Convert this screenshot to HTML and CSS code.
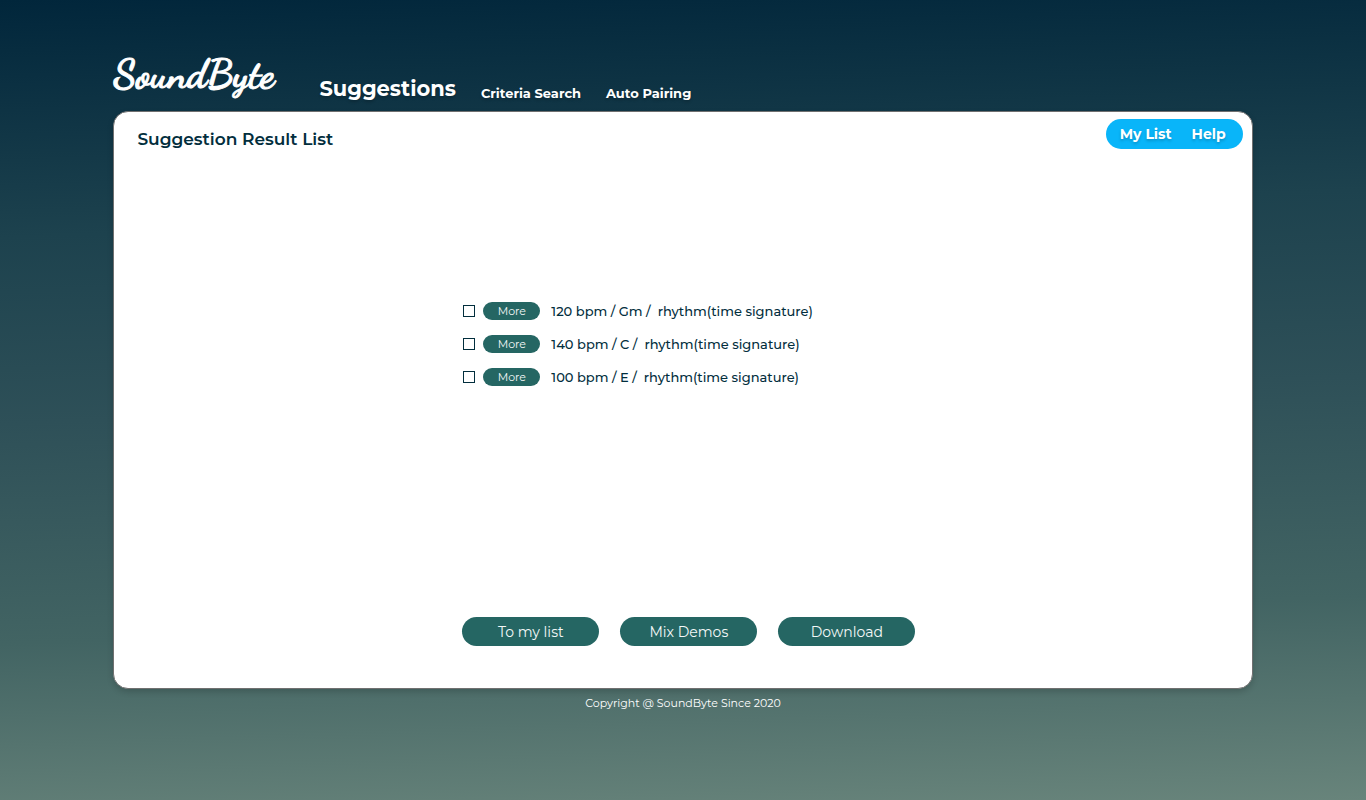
FILE: index.html
```html
<!DOCTYPE html>
<html lang="en">
<head>
<meta charset="utf-8">
<meta name="viewport" content="width=device-width, initial-scale=1">
<title>SoundByte – Suggestions</title>
<link rel="stylesheet" href="styles.css">
</head>
<body>
<div class="page">
  <header class="site-header">
    <a class="logo" href="#">SoundByte</a>
    <nav class="main-nav" aria-label="Main">
      <a class="nav-link nav-link-active" href="#">Suggestions</a>
      <a class="nav-link" href="#">Criteria Search</a>
      <a class="nav-link" href="#">Auto Pairing</a>
    </nav>
  </header>
  <main class="card">
    <div class="card-head">
      <h1 class="title">Suggestion Result List</h1>
      <nav class="pill-nav" aria-label="Account">
        <a href="#">My List</a>
        <a href="#">Help</a>
      </nav>
    </div>
    <div class="content">
      <ul class="results">
        <li class="result">
          <input class="check" type="checkbox" id="r1">
          <button class="btn btn-small" type="button">More</button>
          <label class="result-text" for="r1">120 bpm / Gm /&nbsp; rhythm(time signature)</label>
        </li>
        <li class="result">
          <input class="check" type="checkbox" id="r2">
          <button class="btn btn-small" type="button">More</button>
          <label class="result-text" for="r2">140 bpm / C /&nbsp; rhythm(time signature)</label>
        </li>
        <li class="result">
          <input class="check" type="checkbox" id="r3">
          <button class="btn btn-small" type="button">More</button>
          <label class="result-text" for="r3">100 bpm / E /&nbsp; rhythm(time signature)</label>
        </li>
      </ul>
      <div class="actions">
        <button class="btn btn-large" type="button">To my list</button>
        <button class="btn btn-large" type="button">Mix Demos</button>
        <button class="btn btn-large" type="button">Download</button>
      </div>
    </div>
  </main>
  <footer class="site-footer">Copyright @ SoundByte Since 2020</footer>
</div>
</body>
</html>
```
FILE: styles.css
```css
* {
  box-sizing: border-box;
}

body {
  margin: 0;
  min-height: 100vh;
  font-family: Montserrat, Inter, "Open Sans", sans-serif;
  color: #022e3d;
  background: linear-gradient(178deg, #01263b 0%, #1d424e 28%, #2e5058 50%, #426463 76%, #68847b 100%) no-repeat;
}

a {
  color: inherit;
  text-decoration: none;
}

.page {
  width: 83.4%;
  margin: 0 auto;
  padding-top: 48px;
}

.site-header {
  display: flex;
  align-items: flex-end;
  gap: 42px;
  height: 63px;
  color: #fff;
}

.logo {
  width: 164px;
  padding-bottom: 14px;
  font-family: "Dancing Script", "Liberation Serif", serif;
  font-size: 40px;
  font-weight: 700;
  line-height: 46px;
  -webkit-text-stroke: 1px #fff;
}

.main-nav {
  display: flex;
  align-items: flex-end;
  gap: 25px;
  padding-bottom: 8px;
}

.nav-link {
  font-size: 13px;
  font-weight: 700;
  line-height: 20px;
  text-shadow: 0 2px 3px rgba(0, 0, 0, 0.2);
}

.nav-link-active {
  font-size: 21px;
  line-height: 28px;
}

.card {
  display: flex;
  flex-direction: column;
  min-height: 578px;
  background: #fff;
  border: 1px solid #707070;
  border-radius: 15px;
  box-shadow: 0 3px 6px rgba(0, 0, 0, 0.16);
}

.card-head {
  display: flex;
  align-items: flex-start;
  justify-content: space-between;
  padding: 7px 9px 0 23px;
}

.title {
  margin: 8px 0 0;
  font-size: 17px;
  font-weight: 600;
  line-height: 24px;
}

.pill-nav {
  display: flex;
  gap: 20px;
  padding: 0 17px 0 14px;
  border-radius: 15px;
  background: #09b5f9;
  color: #fff;
  font-size: 14px;
  font-weight: 700;
  line-height: 30px;
  text-shadow: 0 2px 3px rgba(0, 0, 0, 0.2);
}

.content {
  display: flex;
  flex: 1;
  flex-direction: column;
  justify-content: space-between;
  width: 453px;
  margin-left: 30.6%;
  padding: 150px 0 42px;
}

.results {
  display: grid;
  gap: 13px;
  margin: 0;
  padding: 0;
  list-style: none;
}

.result {
  display: flex;
  align-items: center;
  font-size: 13px;
  font-weight: 500;
  line-height: 20px;
}

.check {
  width: 12px;
  height: 12px;
  margin: 0 8px 0 1px;
  appearance: none;
  background: #fff;
  border: 1px solid #022e3d;
}

.check:checked {
  background: #256663;
}

.result-text {
  margin-left: 11px;
}

.btn {
  padding: 0;
  border: 0;
  border-radius: 15px;
  background: #256663;
  color: #f4f8f8;
  font-family: inherit;
  cursor: pointer;
}

.btn-small {
  width: 57px;
  height: 18px;
  font-size: 11px;
}

.btn-large {
  width: 137px;
  height: 29px;
  font-size: 14px;
}

.actions {
  display: flex;
  justify-content: space-between;
}

.site-footer {
  padding: 6px 0;
  color: #fff;
  font-size: 11px;
  line-height: 16px;
  text-align: center;
}
```
